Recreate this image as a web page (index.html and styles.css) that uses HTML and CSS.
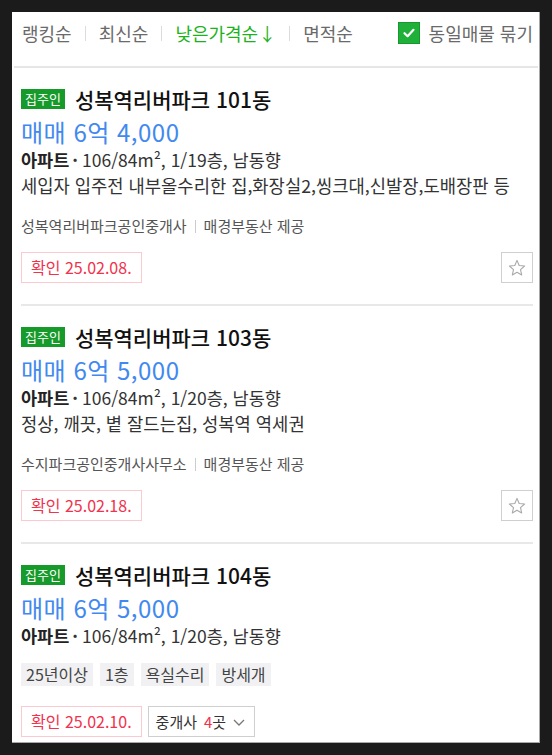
FILE: index.html
```html
<!DOCTYPE html>
<html lang="ko">
<head>
<meta charset="utf-8">
<title>매물 목록</title>
<link rel="stylesheet" href="styles.css">
</head>
<body>
<div class="panel">
  <div class="sortbar">
    <div class="sorts">
      <span class="sort">랭킹순</span><span class="sep"></span>
      <span class="sort">최신순</span><span class="sep"></span>
      <span class="sort active">낮은가격순↓</span><span class="sep"></span>
      <span class="sort">면적순</span>
    </div>
    <div class="group">
      <span class="chk"><svg width="14" height="14" viewBox="0 0 14 14"><path d="M2.5 7.2 L5.6 10.2 L11.5 3.8" fill="none" stroke="#fff" stroke-width="2.2" stroke-linecap="round" stroke-linejoin="round"/></svg></span>
      <span class="group-label">동일매물 묶기</span>
    </div>
  </div>
  <ul class="list">
    <li class="item">
      <div class="head"><span class="badge">집주인</span><span class="title">성복역리버파크 101동</span></div>
      <div class="price">매매 6억 4,000</div>
      <div class="spec"><b>아파트</b><span class="dot">·</span>106/84m², 1/19층, 남동향</div>
      <div class="desc">세입자 입주전 내부올수리한 집,화장실2,씽크대,신발장,도배장판 등</div>
      <div class="agent">성복역리버파크공인중개사<span class="vsep"></span>매경부동산 제공</div>
      <div class="foot">
        <span class="confirm">확인 25.02.08.</span>
        <span class="star"><svg width="20" height="20" viewBox="0 0 20 20"><path d="M10 2.4 L12.2 7.5 L17.6 8 L13.5 11.6 L14.7 17 L10 14.2 L5.3 17 L6.5 11.6 L2.4 8 L7.8 7.5 Z" fill="none" stroke="#a9a9a9" stroke-width="1.1" stroke-linejoin="round"/></svg></span>
      </div>
    </li>
    <li class="item">
      <div class="head"><span class="badge">집주인</span><span class="title">성복역리버파크 103동</span></div>
      <div class="price">매매 6억 5,000</div>
      <div class="spec"><b>아파트</b><span class="dot">·</span>106/84m², 1/20층, 남동향</div>
      <div class="desc">정상, 깨끗, 볕 잘드는집, 성복역 역세권</div>
      <div class="agent">수지파크공인중개사사무소<span class="vsep"></span>매경부동산 제공</div>
      <div class="foot">
        <span class="confirm">확인 25.02.18.</span>
        <span class="star"><svg width="20" height="20" viewBox="0 0 20 20"><path d="M10 2.4 L12.2 7.5 L17.6 8 L13.5 11.6 L14.7 17 L10 14.2 L5.3 17 L6.5 11.6 L2.4 8 L7.8 7.5 Z" fill="none" stroke="#a9a9a9" stroke-width="1.1" stroke-linejoin="round"/></svg></span>
      </div>
    </li>
    <li class="item">
      <div class="head"><span class="badge">집주인</span><span class="title">성복역리버파크 104동</span></div>
      <div class="price">매매 6억 5,000</div>
      <div class="spec"><b>아파트</b><span class="dot">·</span>106/84m², 1/20층, 남동향</div>
      <div class="tags"><span class="tag">25년이상</span><span class="tag">1층</span><span class="tag">욕실수리</span><span class="tag">방세개</span></div>
      <div class="foot">
        <span class="confirm">확인 25.02.10.</span>
        <span class="agents">중개사 <em>4</em>곳<svg width="14" height="10" viewBox="0 0 14 10"><path d="M2 3 L7 8 L12 3" fill="none" stroke="#777" stroke-width="1.3"/></svg></span>
      </div>
    </li>
  </ul>
</div>
</body>
</html>
```
FILE: styles.css
```css
* { box-sizing: border-box; }
body {
  margin: 0;
  padding: 12px 0 0 12px;
  background: #1b1b1b;
  font-family: "Noto Sans CJK KR", "Noto Sans", sans-serif;
  color: #222;
}
.panel {
  width: 528px;
  height: 731px;
  background: #fff;
  overflow: hidden;
  border-right: 1px solid #a8a8a8;
  border-bottom: 1px solid #a8a8a8;
}
.sortbar {
  height: 56px;
  margin: 0 1px 0 2px;
  padding: 0 5px 12px 8px;
  border-bottom: 2px solid #e6e6e6;
  display: flex;
  align-items: center;
  justify-content: space-between;
}
.sorts { display: flex; align-items: center; }
.sort { font-size: 18px; line-height: 22px; color: #6a6a6a; }
.sort.active { color: #1db21d; }
.sep { width: 1px; height: 15px; background: #dcdcdc; margin: 0 13px; }
.group { display: flex; align-items: center; gap: 9px; }
.chk {
  width: 22px; height: 22px;
  background: #1fb03a;
  border: 1px solid #17982e;
  display: flex; align-items: center; justify-content: center;
}
.group-label { font-size: 18px; line-height: 22px; color: #6a6a6a; }
.list { list-style: none; margin: 0; padding: 0 6px 0 9px; }
.item { padding: 19px 0 21px; border-bottom: 2px solid #e8e8e8; }
.head { display: flex; align-items: center; height: 24px; }
.badge {
  background: #169a2a; color: #fff;
  font-size: 13px; line-height: 20px; height: 20px;
  padding: 0 4px; margin-right: 10px;
}
.title { font-size: 21px; line-height: 24px; color: #111; font-weight: 500; }
.price { font-size: 24px; line-height: 32px; color: #4189ef; margin-top: 5px; letter-spacing: 0.5px; }
.spec { font-size: 17.5px; line-height: 24px; color: #333; }
.spec b { font-weight: 700; color: #222; }
.dot { font-weight: 700; margin: 0 4px 0 3px; }
.desc { font-size: 17.7px; line-height: 24px; color: #333; margin-top: 1px; }
.agent { font-size: 15px; line-height: 20px; color: #555; margin-top: 19px; display: flex; align-items: center; }
.vsep { width: 1px; height: 13px; background: #ccc; margin: 0 8px; }
.foot { display: flex; align-items: center; gap: 6px; margin-top: 16px; }
.confirm {
  height: 31px; padding: 0 9px;
  border: 1px solid #fbc9cf;
  color: #f2324c;
  font-size: 16px; line-height: 29px;
}
.star {
  margin-left: auto;
  width: 32px; height: 31px;
  border: 1px solid #cfcfcf;
  display: flex; align-items: center; justify-content: center;
}
.tags { display: flex; gap: 7px; margin-top: 15px; }
.tag {
  background: #f1f1f3; color: #444;
  font-size: 16px; line-height: 23px; height: 23px;
  padding: 0 5px;
}
.item:last-child .foot { margin-top: 20px; }
.agents {
  height: 31px; padding: 0 8px 0 7px;
  border: 1px solid #cfcfcf;
  font-size: 15px; line-height: 29px; color: #333;
  display: flex; align-items: center; gap: 4px;
}
.agents em { font-style: normal; color: #f2324c; margin-left: 3px; margin-right: -4px; }
.agents svg { margin-left: 2px; }
```
